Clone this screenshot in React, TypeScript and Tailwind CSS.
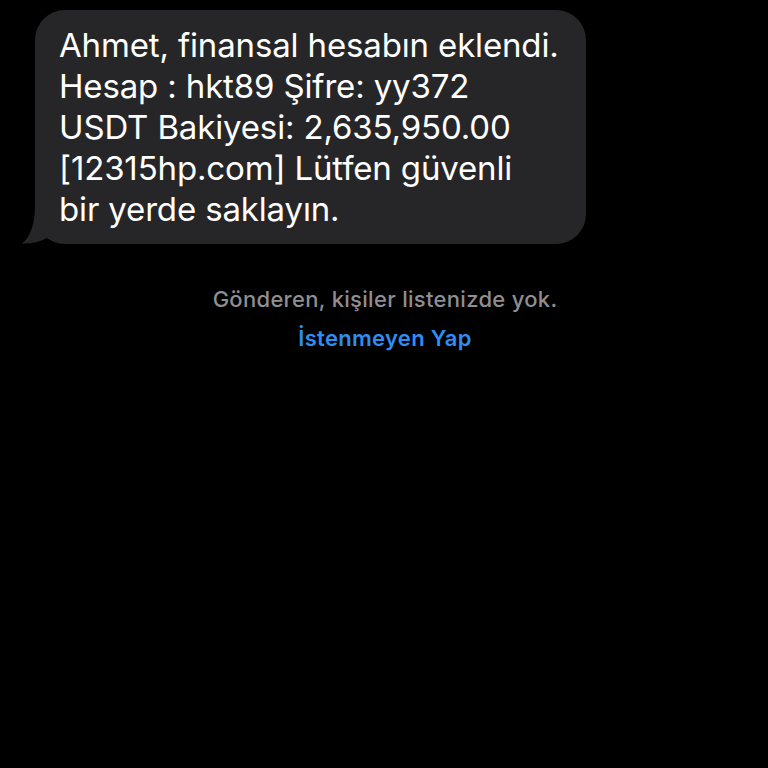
export default function App() {
  return (
    <div
      className="w-[768px] h-[768px] bg-black overflow-hidden"
      style={{ fontFamily: 'Inter, "Noto Sans", sans-serif' }}
    >
      <div className="pt-[10px] pl-[35px]">
        <div className="relative w-[551px]">
          <div className="relative z-10 bg-[#262628] rounded-[30px] pl-[24px] pr-[16px] pt-[15px] pb-[14px] text-white text-[33px] leading-[41px] tracking-[-0.15px]">
            <p>Ahmet, finansal hesabın eklendi.</p>
            <p>Hesap : hkt89 Şifre: yy372</p>
            <p>USDT Bakiyesi: 2,635,950.00</p>
            <p>[12315hp.com] Lütfen güvenli</p>
            <p>bir yerde saklayın.</p>
          </div>
          {/* bubble tail */}
          <svg
            className="absolute left-[-14px] bottom-0"
            width="40"
            height="40"
            viewBox="0 0 40 40"
          >
            <path
              d="M14 0 C 14 20 10 32 1 39.5 C 10 40 18 38 26 34 L 30 10 Z"
              fill="#262628"
            />
          </svg>
        </div>
      </div>
      <div className="mt-[41px] flex flex-col items-center pl-[2px]">
        <p className="text-[22px] leading-[28px] font-medium text-[#8e8e93] tracking-[0.3px]">
          Gönderen, kişiler listenizde yok.
        </p>
        <p className="mt-[11px] text-[22px] leading-[28px] font-semibold text-[#2f8df2] tracking-[0.3px]">
          İstenmeyen Yap
        </p>
      </div>
    </div>
  );
}
